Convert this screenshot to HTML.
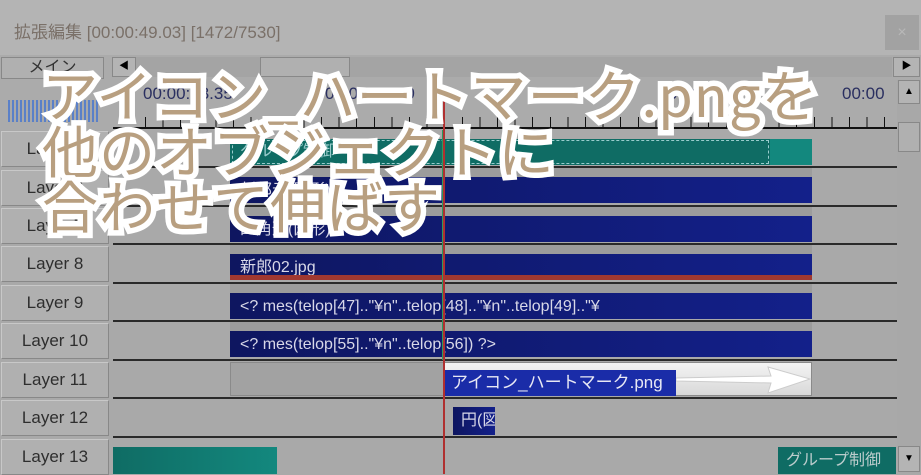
<!DOCTYPE html><html><head><meta charset="utf-8"><style>
*{margin:0;padding:0;box-sizing:border-box}
body{width:921px;height:474px;overflow:hidden;background:#a9a9a9;position:relative;font-family:"Liberation Sans","Noto Sans CJK JP",sans-serif}
.a{position:absolute}
.lbl{position:absolute;left:1px;width:108px;height:36px;background:#b0b0b0;border:1px solid #888;border-top-color:#c8c8c8;border-left-color:#c8c8c8;color:#2e2e2e;font-size:17px;text-align:center;line-height:34px}
.line{position:absolute;left:113px;width:784px;height:2px;background:#2a2a2a}
.blue{position:absolute;background:linear-gradient(90deg,#0e1660,#13208a);color:#d8d8e8;font-size:16px;line-height:28px;padding-left:10px;white-space:nowrap;overflow:hidden}
.gtop{position:absolute;background:#9c9c9c}
.big{position:absolute;left:42px;font-family:"Noto Sans CJK JP",sans-serif;font-weight:400;font-size:56px;color:#b89f80;-webkit-text-stroke:11px #fff;paint-order:stroke fill;white-space:nowrap;line-height:56px;letter-spacing:1px}
</style></head><body>
<div class="a" style="left:0;top:0;width:921px;height:55px;background:#b4b4b4"></div>
<div class="a" style="left:14px;top:18px;font-size:17px;color:#7a7068">拡張編集 [00:00:49.03] [1472/7530]</div>
<div class="a" style="left:885px;top:15px;width:34px;height:35px;background:#a2a2a2;color:#b8b8b8;text-align:center;line-height:35px;font-size:16px">×</div>
<div class="a" style="left:0;top:55px;width:921px;height:75px;background:#ababab"></div>
<div class="a" style="left:112px;top:57px;width:780px;height:20px;background:#a4a4a4"></div>
<div class="a" style="left:1px;top:57px;width:103px;height:22px;background:#b0b0b0;border:1px solid #888;font-size:16px;line-height:20px;text-align:center;color:#333">メイン</div>
<div class="a" style="left:112px;top:57px;width:24px;height:20px;background:#b4b4b4;border:1px solid #888;font-size:10px;text-align:center;line-height:18px">◀</div>
<div class="a" style="left:260px;top:57px;width:90px;height:20px;background:#b0b0b0;border:1px solid #888"></div>
<div class="a" style="left:893px;top:57px;width:27px;height:20px;background:#b4b4b4;border:1px solid #888;font-size:10px;text-align:center;line-height:18px">▶</div>
<div class="a" style="left:8px;top:100px;width:90px;height:22px;background:repeating-linear-gradient(90deg,#5a80c8 0 2px,#a9a9a9 2px 4px)"></div>
<div class="a" style="left:143px;top:84px;font-size:17px;color:#2a2f60">00:00:13.35</div>
<div class="a" style="left:325px;top:84px;font-size:17px;color:#2a2f60">00:00:00.00</div>
<div class="a" style="left:668px;top:84px;font-size:17px;color:#2a2f60">00:00</div>
<div class="a" style="left:842px;top:84px;font-size:17px;color:#2a2f60">00:00</div>
<div class="a" style="left:145px;top:117px;width:752px;height:11px;background:repeating-linear-gradient(90deg,#111 0 1px,transparent 1px 17.6px)"></div>
<div class="a" style="left:113px;top:127px;width:784px;height:2px;background:#111"></div>
<div class="a" style="left:897px;top:80px;width:24px;height:394px;background:#a8a8a8"></div>
<div class="a" style="left:898px;top:80px;width:22px;height:24px;background:#b4b4b4;border:1px solid #888;font-size:10px;text-align:center;line-height:22px">▲</div>
<div class="a" style="left:898px;top:122px;width:22px;height:30px;background:#b0b0b0;border:1px solid #888"></div>
<div class="a" style="left:898px;top:446px;width:22px;height:26px;background:#b4b4b4;border:1px solid #888;font-size:10px;text-align:center;line-height:24px">▼</div>

<div class="lbl" style="top:131px">Layer 5</div>
<div class="lbl" style="top:170px">Layer 6</div>
<div class="lbl" style="top:208px">Layer 7</div>
<div class="lbl" style="top:246px">Layer 8</div>
<div class="lbl" style="top:285px">Layer 9</div>
<div class="lbl" style="top:323px">Layer 10</div>
<div class="lbl" style="top:362px">Layer 11</div>
<div class="lbl" style="top:400px">Layer 12</div>
<div class="lbl" style="top:439px">Layer 13</div>
<div class="line" style="top:166px"></div>
<div class="line" style="top:205px"></div>
<div class="line" style="top:243px"></div>
<div class="line" style="top:282px"></div>
<div class="line" style="top:320px"></div>
<div class="line" style="top:359px"></div>
<div class="line" style="top:397px"></div>
<div class="line" style="top:436px"></div>

<div class="a" style="left:230px;top:139px;width:582px;height:26px;background:#0f6c64;color:#9cc;font-size:16px;line-height:26px;padding-left:10px">グループ制御</div>
<div class="a" style="left:232px;top:140px;width:537px;height:24px;border:1px dashed #9cc"></div>
<div class="a" style="left:770px;top:139px;width:42px;height:26px;background:#13887e"></div>
<div class="gtop" style="left:230px;top:168px;width:582px;height:9px"></div>
<div class="blue" style="left:230px;top:177px;width:582px;height:26px">新郎元(図形)</div>
<div class="gtop" style="left:230px;top:207px;width:582px;height:9px"></div>
<div class="blue" style="left:230px;top:216px;width:582px;height:26px">四角形(図形)</div>
<div class="gtop" style="left:230px;top:245px;width:582px;height:9px"></div>
<div class="blue" style="left:230px;top:254px;width:582px;height:22px">新郎02.jpg</div>
<div class="a" style="left:230px;top:275px;width:582px;height:5px;background:#a03830"></div>
<div class="gtop" style="left:230px;top:284px;width:582px;height:9px"></div>
<div class="blue" style="left:230px;top:293px;width:582px;height:26px">&lt;? mes(telop[47].."¥n"..telop[48].."¥n"..telop[49].."¥</div>
<div class="gtop" style="left:230px;top:322px;width:582px;height:9px"></div>
<div class="blue" style="left:230px;top:331px;width:582px;height:26px">&lt;? mes(telop[55].."¥n"..telop[56]) ?&gt;</div>
<div class="a" style="left:230px;top:362px;width:582px;height:34px;background:#a2a2a2;border:1px solid #8a8a8a"></div>
<div class="a" style="left:443px;top:363px;width:368px;height:32px;background:linear-gradient(#f4f4f4,#d8d8d8)"></div>
<div class="a" style="left:443px;top:370px;width:233px;height:26px;background:#1a2ca8;color:#e8e8f4;font-size:17px;line-height:26px;padding-left:8px">アイコン_ハートマーク.png</div>
<svg class="a" style="left:676px;top:364px" width="136" height="32"><path d="M0 14 L95 12 L92 3 L134 15 L92 29 L95 19 L0 17Z" fill="#fff" stroke="#ccc"/></svg>
<div class="blue" style="left:453px;top:407px;width:42px;height:28px;padding-left:8px">円(図</div>
<div class="a" style="left:113px;top:447px;width:164px;height:27px;background:linear-gradient(90deg,#0f6c64,#13887e)"></div>
<div class="a" style="left:778px;top:447px;width:118px;height:27px;background:#0f6c64;color:#bcc;font-size:16px;line-height:27px;padding-left:8px">グループ制御</div>
<div class="a" style="left:442px;top:130px;width:1px;height:230px;background:#2a9a60"></div>
<div class="a" style="left:443px;top:100px;width:2px;height:374px;background:#b03030"></div>

<div class="big" style="top:66px">アイコン_ハートマーク.pngを</div>
<div class="big" style="top:122px">他のオブジェクトに</div>
<div class="big" style="top:177px">合わせて伸ばす</div>
</body></html>
